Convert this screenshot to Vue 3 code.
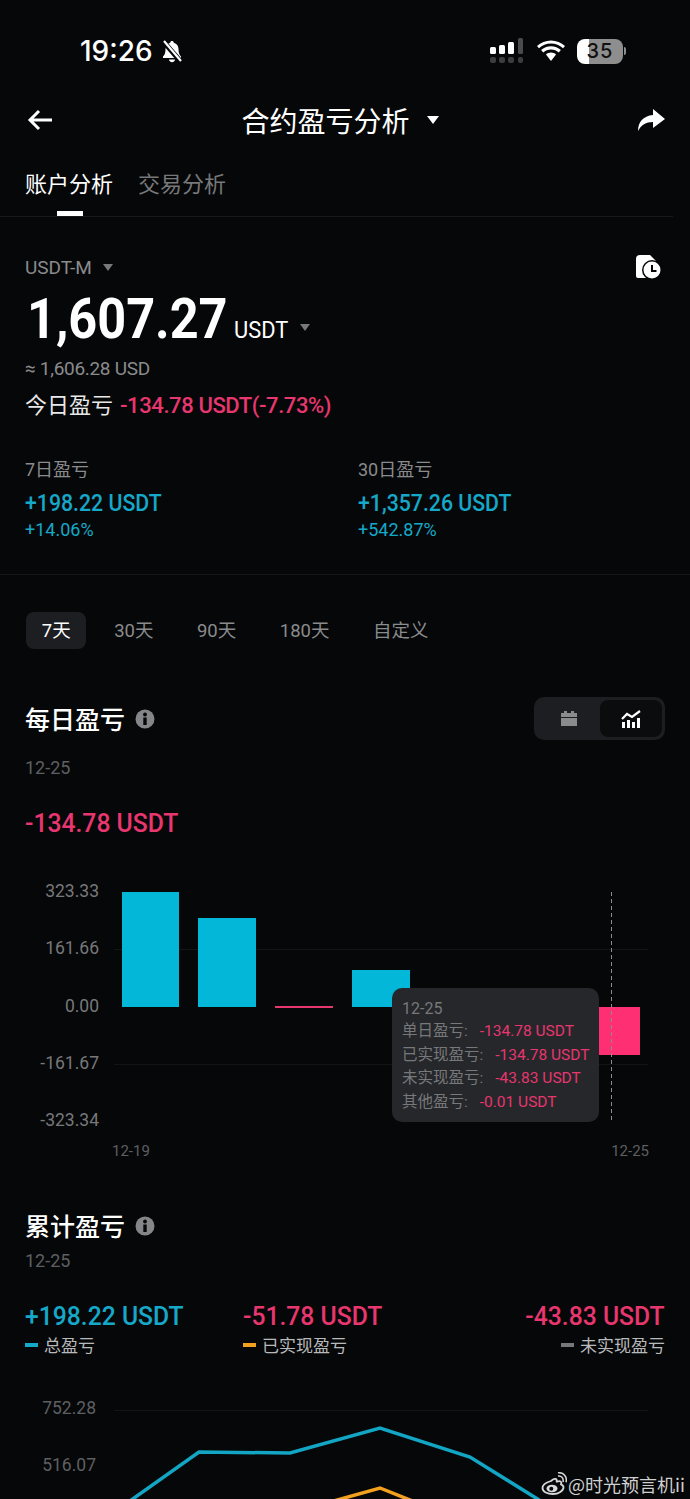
<script setup>
const rangeTabs = ['7天', '30天', '90天', '180天', '自定义']

const stats = [
  { label: '7日盈亏', value: '+198.22 USDT', pct: '+14.06%' },
  { label: '30日盈亏', value: '+1,357.26 USDT', pct: '+542.87%' },
]

const yLabels = [
  { text: '323.33', y: 891 },
  { text: '161.66', y: 948 },
  { text: '0.00', y: 1006 },
  { text: '-161.67', y: 1063 },
  { text: '-323.34', y: 1120 },
].map((l) => ({ text: l.text, y: l.y - 875 + 6 }))

// x, top, width, height in chart coordinates
const bars = [
  { x: 122, y: 17, w: 57, h: 115, c: '#02b7d8' },
  { x: 198, y: 43, w: 58, h: 89, c: '#02b7d8' },
  { x: 275, y: 131, w: 58, h: 2, c: '#e8366f' },
  { x: 352, y: 95, w: 58, h: 37, c: '#02b7d8' },
  { x: 582, y: 132, w: 58, h: 48, c: '#ff2f73' },
]

const tipRows = [
  { label: '单日盈亏', value: '-134.78 USDT' },
  { label: '已实现盈亏', value: '-134.78 USDT' },
  { label: '未实现盈亏', value: '-43.83 USDT' },
  { label: '其他盈亏', value: '-0.01 USDT' },
]

const totals = [
  { value: '+198.22 USDT', tone: 'up', label: '总盈亏', dash: '#14a9c9' },
  { value: '-51.78 USDT', tone: 'down', label: '已实现盈亏', dash: '#f2a01e' },
  { value: '-43.83 USDT', tone: 'down', label: '未实现盈亏', dash: '#77787a', end: true },
]
</script>

<template>
  <div class="page">
    <div class="status">
      <div class="status-left">
        <span class="clock">19:26</span>
        <svg width="22" height="23" viewBox="0 0 22 23">
          <path d="M11 1c1 0 1.700.7 1.800 1.700 3 .8 4.700 3.300 4.700 6.300 0 3.500.6 5.500 2.500 7.500v1.500H2v-1.500C4 14.500 4.500 12.500 4.500 9c0-3 1.700-5.500 4.700-6.300C9.300 1.700 10 1 11 1z" fill="#fff"/>
          <path d="M8 19.500h6c-.3 1.700-1.500 2.700-3 2.700s-2.700-1-3-2.700z" fill="#fff"/>
          <path d="M2 1l18 21" stroke="#060708" stroke-width="5"/>
          <path d="M3 1l17 20" stroke="#fff" stroke-width="2.200"/>
        </svg>
      </div>
      <div class="status-right">
        <svg width="36" height="26" viewBox="0 0 36 26">
          <rect x="0" y="9" width="6" height="7" rx="1.500" fill="#fff"/>
          <rect x="9" y="7" width="6" height="9" rx="1.500" fill="#fff"/>
          <rect x="18" y="4" width="6" height="12" rx="1.500" fill="#fff"/>
          <rect x="28" y="0" width="5" height="16" rx="1.500" fill="#4a4b4d"/>
          <rect x="0" y="19" width="6" height="6" rx="2" fill="#3c3d3f"/>
          <rect x="9" y="19" width="6" height="6" rx="2" fill="#3c3d3f"/>
          <rect x="18" y="19" width="6" height="6" rx="2" fill="#3c3d3f"/>
          <rect x="28" y="19" width="5" height="6" rx="2" fill="#3c3d3f"/>
        </svg>
        <svg class="wifi" width="30" height="22" viewBox="0 0 30 22">
          <path d="M15 3.500c-4.700 0-8.800 1.800-12 4.800l-2-2.300C4.800 2.500 9.700.4 15 .4s10.200 2.100 14 5.600l-2 2.300c-3.200-3-7.300-4.800-12-4.800z" fill="#fff"/>
          <path d="M15 9.500c-3 0-5.600 1.100-7.700 3l-2.200-2.400C7.700 7.700 11.200 6.300 15 6.300s7.300 1.400 9.900 3.800l-2.200 2.400c-2.100-1.900-4.700-3-7.700-3z" fill="#fff"/>
          <path d="M15 12.500c2 0 3.700.7 5 1.900L15 21l-5-6.600c1.300-1.200 3-1.900 5-1.900z" fill="#fff"/>
        </svg>
        <div class="battery">
          <div class="battery-body"><span>35</span></div>
          <div class="battery-nub"></div>
        </div>
      </div>
    </div>

    <div class="nav">
      <svg width="26" height="22" viewBox="0 0 26 22">
        <path d="M25 11H3M12 2l-9 9 9 9" fill="none" stroke="#fff" stroke-width="3"/>
      </svg>
      <div class="nav-title">
        <span>合约盈亏分析</span>
        <i class="caret caret-white"></i>
      </div>
      <svg width="28" height="24" viewBox="0 0 28 24">
        <path d="M16 1l12 10-12 9v-6C9 14 4 17 1 23c0-9 5-15 15-16z" fill="#fff"/>
      </svg>
    </div>

    <div class="tabs">
      <div class="tab tab-on">账户分析<b></b></div>
      <div class="tab">交易分析</div>
    </div>

    <section class="account">
      <div class="market">
        <div class="market-name">USDT-M <i class="caret caret-gray"></i></div>
        <svg width="26" height="24" viewBox="0 0 26 24">
          <path d="M4 0h10l6 6v17H2a2 2 0 0 1-2-2V4a4 4 0 0 1 4-4z" fill="#fff"/>
          <circle cx="16" cy="15" r="10" fill="#060708"/>
          <circle cx="16" cy="15" r="8.500" fill="#fff"/>
          <path d="M16 10v6h4.500" fill="none" stroke="#060708" stroke-width="2"/>
        </svg>
      </div>
      <div class="balance">
        <span class="balance-num">1,607.27</span>
        <span class="balance-unit">USDT</span>
        <i class="caret caret-gray"></i>
      </div>
      <div class="approx">≈ 1,606.28 USD</div>
      <div class="today">今日盈亏<span class="down">-134.78 USDT(-7.73%)</span></div>
      <div class="stats">
        <div v-for="s in stats" :key="s.label">
          <div class="stat-label">{{ s.label }}</div>
          <div class="stat-value up">{{ s.value }}</div>
          <div class="stat-pct up">{{ s.pct }}</div>
        </div>
      </div>
    </section>

    <div class="ranges">
      <div v-for="(r, i) in rangeTabs" :key="r" class="range" :class="{ 'range-on': i === 0 }">{{ r }}</div>
    </div>

    <div class="head head-daily">
      <div class="head-title">
        <span>每日盈亏</span>
        <svg width="20" height="20" viewBox="0 0 20 20">
          <circle cx="10" cy="10" r="9.500" fill="#85868a"/>
          <rect x="8.300" y="8.500" width="3.400" height="7.500" fill="#060708"/>
          <circle cx="10" cy="5.500" r="1.900" fill="#060708"/>
        </svg>
      </div>
      <div class="toggle">
        <div class="toggle-btn">
          <svg width="18" height="16" viewBox="0 0 18 16">
            <path d="M1 2h3V0h3v2h4V0h3v2h3v4H1z" fill="#8a8b8d"/>
            <rect x="1" y="7" width="16" height="8" fill="#8a8b8d"/>
          </svg>
        </div>
        <div class="toggle-btn toggle-on">
          <svg width="20" height="18" viewBox="0 0 20 18">
            <rect x="1" y="12" width="3" height="6" fill="#fff"/>
            <rect x="6" y="10" width="3" height="8" fill="#fff"/>
            <rect x="11" y="12" width="3" height="6" fill="#fff"/>
            <rect x="16" y="8" width="3" height="10" fill="#fff"/>
            <path d="M1 9l5-5 5 3 8-6" fill="none" stroke="#fff" stroke-width="2.200"/>
          </svg>
        </div>
      </div>
    </div>
    <div class="date date-daily">12-25</div>
    <div class="day-value down">-134.78 USDT</div>

    <div class="chart">
      <svg width="690" height="290" viewBox="0 0 690 290">
        <line x1="114" y1="74.500" x2="648" y2="74.500" stroke="#121416"/>
        <line x1="114" y1="189.500" x2="648" y2="189.500" stroke="#121416"/>
        <text v-for="l in yLabels" :key="l.text" x="99" :y="l.y" text-anchor="end" class="axis">{{ l.text }}</text>
        <rect v-for="b in bars" :key="b.x" :x="b.x" :y="b.y" :width="b.w" :height="b.h" :fill="b.c"/>
        <line x1="611.500" y1="17" x2="611.500" y2="247" stroke="#8b8c8e" stroke-dasharray="4 3"/>
        <text x="112" y="281" class="axis axis-small">12-19</text>
        <text x="649" y="281" text-anchor="end" class="axis axis-small">12-25</text>
      </svg>
      <div class="tip">
        <div class="tip-date">12-25</div>
        <div v-for="t in tipRows" :key="t.label" class="tip-row">
          <span>{{ t.label }}:</span>
          <span class="tip-val">{{ t.value }}</span>
        </div>
      </div>
    </div>

    <div class="head head-total">
      <div class="head-title">
        <span>累计盈亏</span>
        <svg width="20" height="20" viewBox="0 0 20 20">
          <circle cx="10" cy="10" r="9.500" fill="#85868a"/>
          <rect x="8.300" y="8.500" width="3.400" height="7.500" fill="#060708"/>
          <circle cx="10" cy="5.500" r="1.900" fill="#060708"/>
        </svg>
      </div>
    </div>
    <div class="date date-total">12-25</div>

    <div class="totals">
      <div v-for="t in totals" :key="t.label" class="total" :class="{ 'total-end': t.end }">
        <div class="total-value" :class="t.tone">{{ t.value }}</div>
        <div class="total-label">
          <i :style="{ background: t.dash }"></i>{{ t.label }}
        </div>
      </div>
    </div>

    <div class="chart-line">
      <svg width="690" height="109" viewBox="0 0 690 109">
        <line x1="114" y1="20.500" x2="648" y2="20.500" stroke="#121416"/>
        <text x="96" y="24" text-anchor="end" class="axis axis-dim">752.28</text>
        <text x="96" y="81" text-anchor="end" class="axis axis-dim">516.07</text>
        <path d="M120 118L199 62L290 63L380 38L470 67L552 118" fill="none" stroke="#12a5c4" stroke-width="3.500"/>
        <path d="M330 112L380 98L425 116" fill="none" stroke="#f2a01e" stroke-width="3.500"/>
      </svg>
    </div>

    <div class="mark">
      <svg width="26" height="24" viewBox="0 0 26 24">
        <path d="M10 9c3-2.500 5-2.500 5.500-1.500.4 1-.2 2 .3 2.200 2-.8 4-.6 4.500.6.300.9-.2 1.600-.3 2 1.500.6 2.500 1.500 2.500 3 0 3.500-5 6.700-10.500 6.700C6.500 22 1.500 19.800 1.500 16c0-2.500 3.500-5.500 8.500-7z" fill="none" stroke="#d8d8d8" stroke-width="1.800"/>
        <ellipse cx="11" cy="16.500" rx="5.500" ry="3.800" fill="#d8d8d8"/>
        <circle cx="10.300" cy="16.700" r="2" fill="#060708"/>
        <path d="M17 4c3-.6 6 2 5 6M17 .8c5.500-.8 9.500 4 8 9.500" fill="none" stroke="#d8d8d8" stroke-width="1.500"/>
      </svg>
      <span>@时光预言机ii</span>
    </div>
  </div>
</template>

<style>
html, body {
  margin: 0;
  background: #060708;
}
</style>

<style scoped>
.page {
  position: relative;
  width: 690px;
  height: 1499px;
  overflow: hidden;
  background: #060708;
  color: #fff;
  font-family: Roboto, "Noto Sans CJK SC", sans-serif;
}
.up { color: #15a8c8; }
.down { color: #e8366f; }
.caret {
  display: inline-block;
  width: 0;
  height: 0;
  border-left: 6px solid transparent;
  border-right: 6px solid transparent;
}
.caret-white { border-top: 8px solid #fff; }
.caret-gray {
  border-left-width: 5px;
  border-right-width: 5px;
  border-top: 7px solid #77787a;
}

.status {
  display: flex;
  justify-content: space-between;
  align-items: center;
  height: 102px;
  padding: 0 64px 0 80px;
}
.status-left {
  display: flex;
  align-items: center;
  gap: 8px;
}
.clock {
  font-family: Inter, "Noto Sans", sans-serif;
  font-size: 28px;
  font-weight: 500;
}
.status-right {
  display: flex;
  align-items: center;
}
.wifi { margin-left: 10px; margin-right: -1px; }
.battery {
  display: flex;
  align-items: center;
  margin-left: 12px;
}
.battery-body {
  display: flex;
  justify-content: center;
  align-items: center;
  width: 46px;
  height: 25px;
  border-radius: 8px;
  background: linear-gradient(90deg, #fff 0, #fff 27%, #8e8e8e 27%);
  color: #111;
  font-family: Inter, sans-serif;
  font-size: 20px;
  font-weight: 500;
  letter-spacing: 1px;
}
.battery-nub {
  width: 2px;
  height: 8px;
  margin-left: 1px;
  border-radius: 0 2px 2px 0;
  background: #8e8e8e;
}

.nav {
  display: flex;
  justify-content: space-between;
  align-items: center;
  height: 36px;
  padding: 0 25px 0 27px;
}
.nav-title {
  display: flex;
  align-items: center;
  gap: 17px;
  margin-left: -10px;
  font-size: 28px;
  font-family: "Noto Sans CJK SC", sans-serif;
}

.tabs {
  display: flex;
  gap: 25px;
  height: 79px;
  box-sizing: border-box;
  padding: 29px 0 0 25px;
  border-bottom: 1px solid #16181a;
  margin-right: 17px;
}
.tab {
  position: relative;
  height: 30px;
  line-height: 30px;
  font-family: "Noto Sans CJK SC", sans-serif;
  font-size: 22px;
  color: #77787a;
}
.tab-on { color: #fff; }
.tab b {
  position: absolute;
  left: 32px;
  top: 44px;
  width: 26px;
  height: 5px;
  background: #fff;
}

.account {
  padding: 38px 25px 33px;
  border-bottom: 1px solid #141618;
}
.market {
  display: flex;
  justify-content: space-between;
  align-items: center;
  height: 24px;
  padding-right: 3px;
}
.market-name {
  display: flex;
  align-items: center;
  gap: 11px;
  font-size: 19px;
  color: #8a8b8d;
}
.balance {
  display: flex;
  align-items: baseline;
  height: 60px;
  margin-top: 7px;
}
.balance-num {
  display: inline-block;
  margin: 0 -20px 0 2px;
  font-size: 56px;
  font-weight: 700;
  transform: scaleX(0.9);
  transform-origin: left;
}
.balance-unit {
  display: inline-block;
  margin-left: 4px;
  font-size: 23px;
  transform: scaleX(0.95);
  transform-origin: left;
}
.balance .caret {
  align-self: center;
  margin-top: 22px;
  margin-left: 9px;
}
.approx {
  height: 24px;
  line-height: 24px;
  margin-top: 11px;
  font-size: 19px;
  color: #8a8b8d;
  letter-spacing: -0.3px;
}
.today {
  display: flex;
  gap: 7px;
  height: 28px;
  line-height: 28px;
  margin-top: 11px;
  font-size: 22px;
  color: #e8e8e8;
}
.today span { font-weight: 500; letter-spacing: -0.4px; }
.stats {
  display: grid;
  grid-template-columns: 333px 1fr;
  margin-top: 38px;
}
.stat-label {
  height: 24px;
  line-height: 24px;
  font-size: 18px;
  color: #8a8b8d;
}
.stat-value {
  height: 28px;
  line-height: 28px;
  margin-top: 8px;
  font-size: 23px;
  font-weight: 500;
  transform: scaleX(0.925);
  transform-origin: left;
}
.stat-pct {
  height: 22px;
  line-height: 22px;
  margin-top: 1px;
  font-size: 18px;
}

.ranges {
  display: flex;
  gap: 12px;
  height: 37px;
  margin: 37px 0 0 26px;
}
.range {
  padding: 0 15.750px;
  line-height: 38px;
  border-radius: 8px;
  font-size: 18.500px;
  color: #8a8b8d;
}
.range-on {
  background: #1c1e21;
  color: #fff;
}

.head {
  display: flex;
  justify-content: space-between;
  align-items: center;
  padding: 0 25px;
}
.head-daily {
  height: 43px;
  margin-top: 48px;
}
.head-total {
  height: 30px;
  margin-top: 46px;
}
.head-title {
  display: flex;
  align-items: center;
  gap: 10px;
  font-family: "Noto Sans CJK SC", sans-serif;
  font-size: 25px;
  font-weight: 500;
}
.head-title span { margin-top: -2px; }
.toggle {
  display: flex;
  justify-content: flex-end;
  width: 131px;
  height: 43px;
  box-sizing: border-box;
  padding: 3px;
  border-radius: 10px;
  background: #1c1e21;
}
.toggle-btn {
  display: flex;
  justify-content: center;
  align-items: center;
  width: 62px;
}
.toggle-on {
  border-radius: 8px;
  background: #0b0c0e;
}
.date {
  height: 22px;
  line-height: 22px;
  padding-left: 25px;
  font-size: 18px;
  color: #5e5f62;
}
.date-daily { margin-top: 17px; }
.date-total { margin-top: 9px; }
.day-value {
  height: 30px;
  line-height: 30px;
  margin-top: 29px;
  margin-left: 25px;
  font-size: 26px;
  font-weight: 500;
  transform: scaleX(0.95);
  transform-origin: left;
}

.chart {
  position: relative;
  height: 290px;
  margin-top: 37px;
}
.chart svg, .chart-line svg { display: block; }
.axis {
  font-size: 17.500px;
  fill: #77787a;
}
.axis-small { font-size: 15px; fill: #5e5f62; }
.axis-dim { fill: #5e5f62; }
.tip {
  position: absolute;
  left: 392px;
  top: 113px;
  width: 207px;
  height: 134px;
  box-sizing: border-box;
  padding: 9px 0 0 10px;
  border-radius: 10px;
  background: #25272b;
  font-size: 15.500px;
  color: #77787a;
}
.tip-date {
  height: 23px;
  line-height: 23px;
  font-size: 16px;
}
.tip-row {
  display: flex;
  height: 23.500px;
  line-height: 23.500px;
  white-space: nowrap;
}
.tip-val {
  margin-left: 12px;
  color: #e8366f;
  font-size: 15.500px;
}

.totals {
  display: grid;
  grid-template-columns: 218px 1fr auto;
  margin-top: 29px;
  padding: 0 25px;
}
.total-value {
  height: 30px;
  line-height: 30px;
  font-size: 26px;
  font-weight: 500;
  transform: scaleX(0.95);
  transform-origin: left;
}
.total-label {
  display: flex;
  align-items: center;
  gap: 6px;
  height: 22px;
  margin-top: 2px;
  font-size: 17px;
  color: #b8b9bb;
}
.total-label i {
  width: 13px;
  height: 4px;
  margin-top: 2px;
}
.total-end { text-align: right; }
.total-end .total-value { transform-origin: right; }
.total-end .total-label { justify-content: flex-end; }

.chart-line {
  height: 109px;
  margin-top: 35px;
}

.mark {
  position: absolute;
  left: 541px;
  top: 1471px;
  display: flex;
  align-items: center;
  gap: 1px;
  font-family: "Noto Sans CJK SC", sans-serif;
  font-size: 18px;
  color: #d0d0d0;
  white-space: nowrap;
}
</style>
